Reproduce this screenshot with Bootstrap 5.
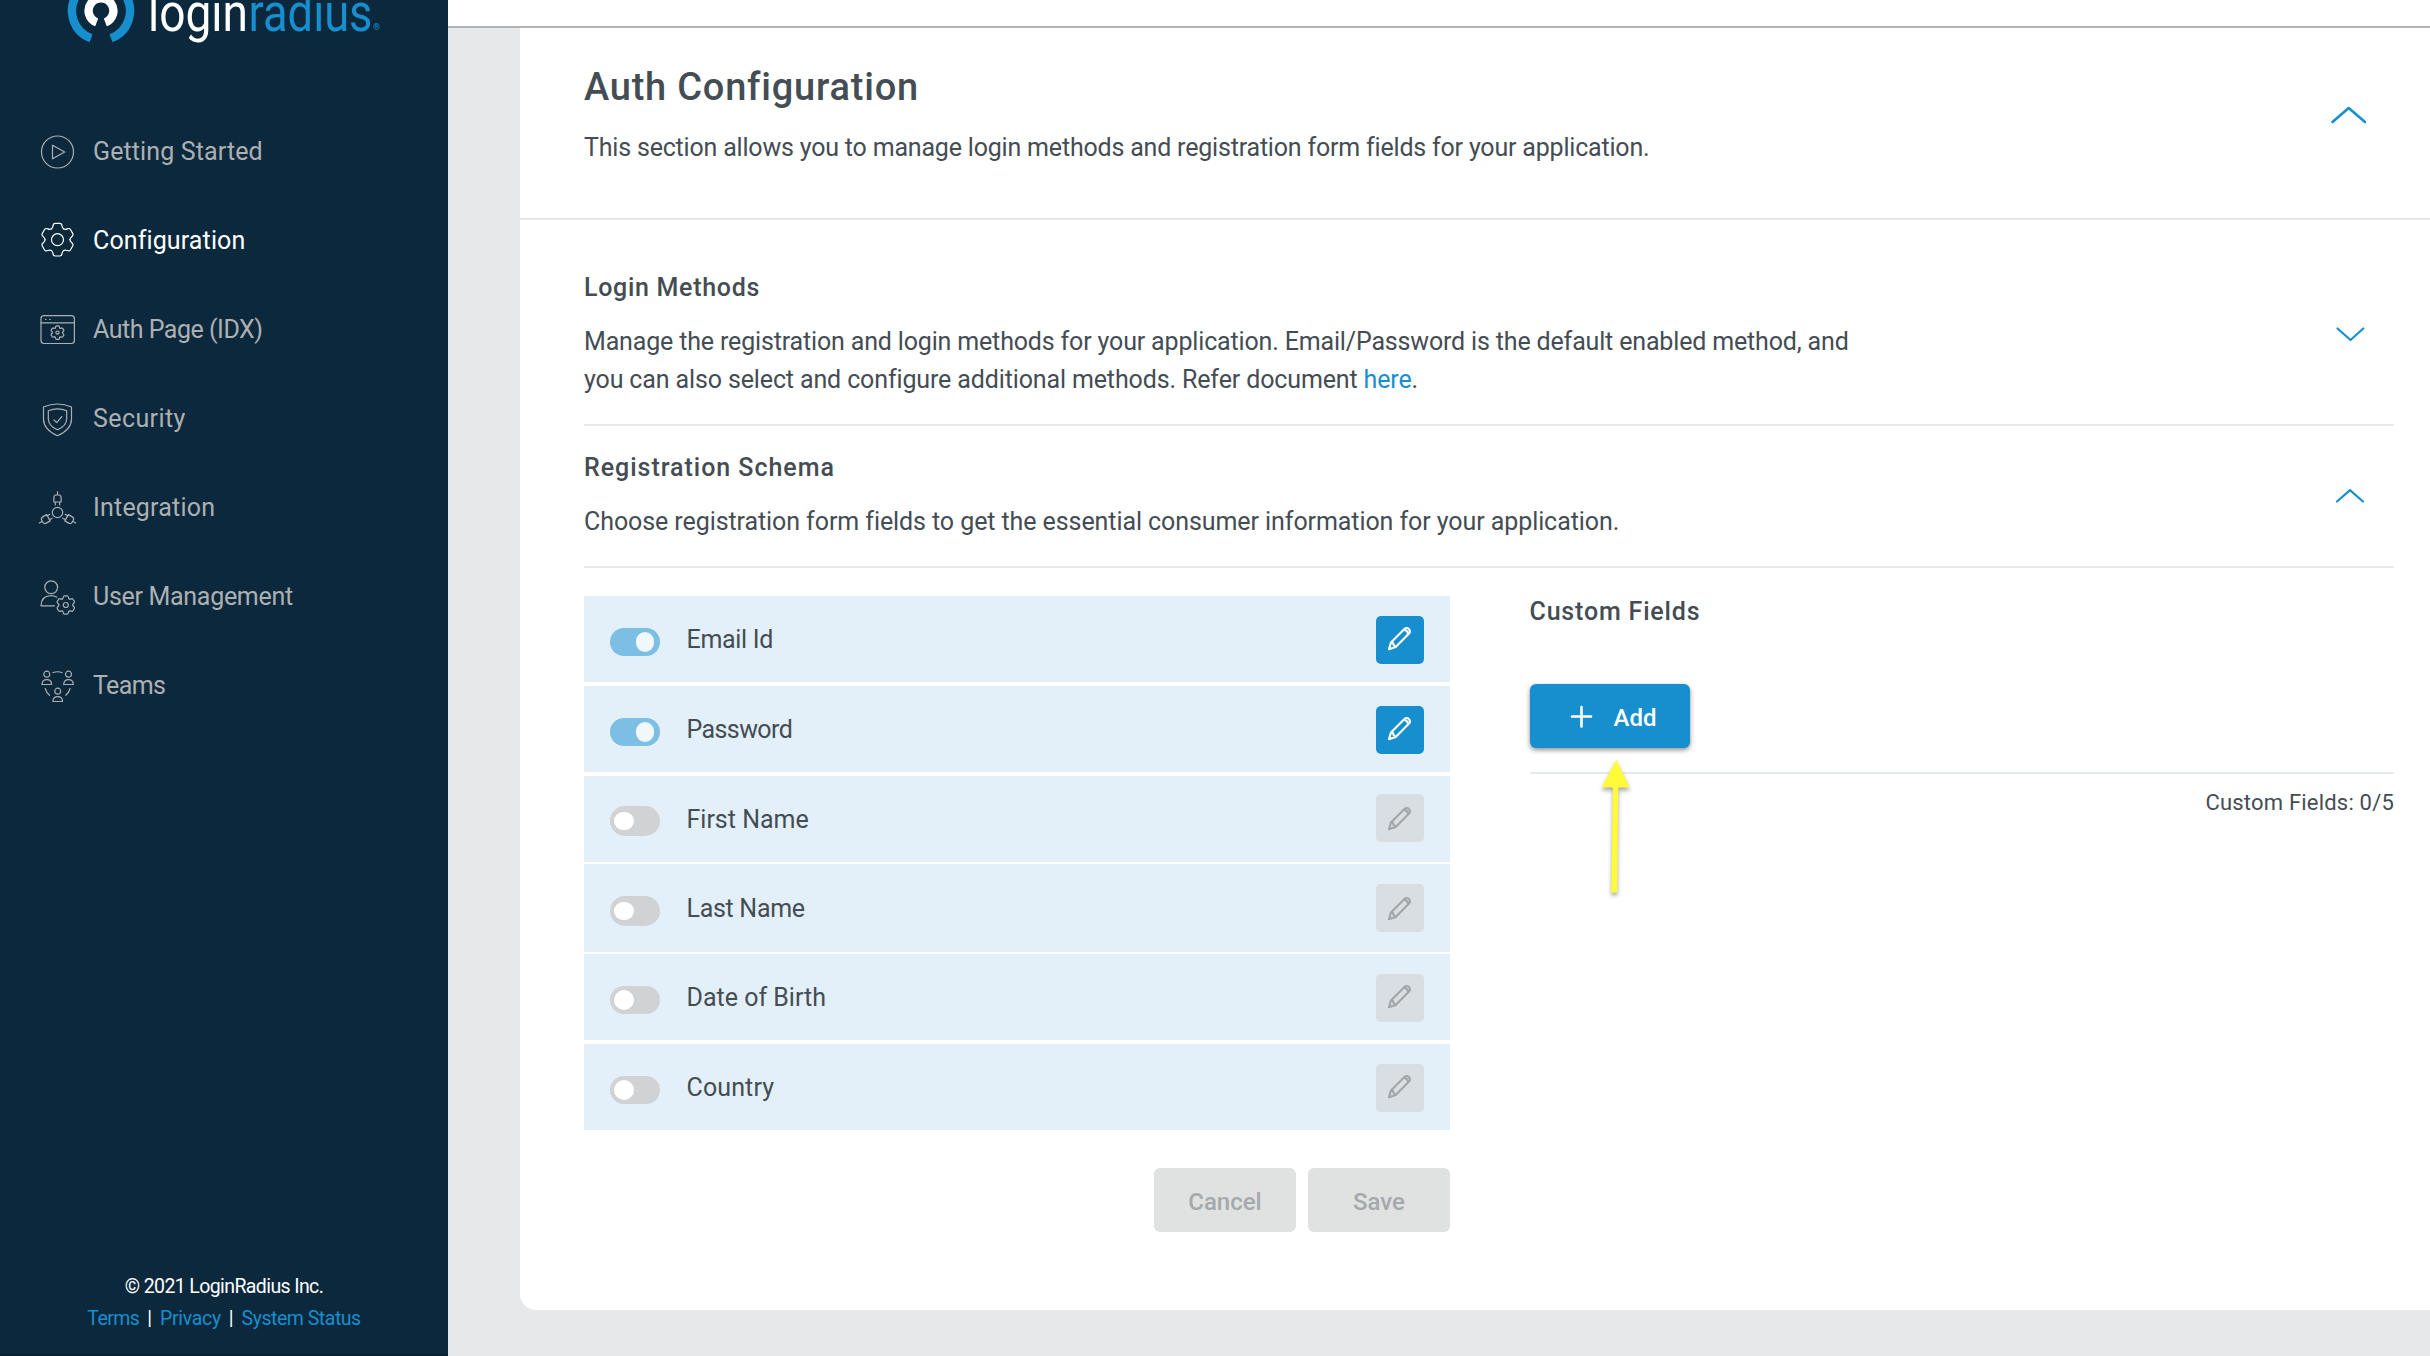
<!DOCTYPE html>
<html lang="en">
<head>
<meta charset="utf-8">
<title>Auth Configuration</title>
<link href="https://cdn.jsdelivr.net/npm/bootstrap@5.3.0/dist/css/bootstrap.min.css" rel="stylesheet">
<style>
body{font-family:Roboto,"Liberation Sans",sans-serif;font-size:25px;line-height:38px;color:#444c54;background:#e7e8ea;height:1356px;overflow:hidden}
a{color:#178fcf;text-decoration:none}
.side-panel{width:448px;height:1356px;background:#0b283c;border-bottom:2px solid #09202f}
.brand{height:107px}
.side-nav .nav-link{height:89px;padding:0 0 0 37px;gap:15px;color:#adb0b3}
.side-nav .nav-link.active{color:#fff}
.side-nav svg{width:41px;height:40px;fill:none;stroke:currentColor;stroke-width:1.2;stroke-linecap:round;stroke-linejoin:round;overflow:visible}
.side-nav use{vector-effect:non-scaling-stroke}
.side-foot{font-size:19.5px;line-height:32px;color:#fff;padding-bottom:19px}
.foot-links{gap:8px}
.topbar{height:28px;background:#fff;border-bottom:2px solid #b0b3b6}
.panel{margin-left:72px;height:1282px;background:#fff;border-radius:0 0 0 16px}
.panel-head{height:192px;padding:36px 64px 0 64px;border-bottom:2px solid #e8e8e8}
.panel-title{font-size:38px;line-height:46px;font-weight:500;letter-spacing:.78px;margin-bottom:19px}
.inner{padding:0 36px 0 64px}
.section-row{border-bottom:2px solid #e8e8e8;padding-right:28px}
.sec-login{height:206px;padding-top:49px}
.sec-schema{height:142px;padding-top:23px}
.sub-title{font-size:25px;line-height:38px;font-weight:500;margin-bottom:16px}
.chev{fill:none;stroke:#178fcf;stroke-width:2.6;stroke-linecap:round;stroke-linejoin:round;flex:none}
.schema-col{width:866px;margin-top:4px}
.field{background:#e3f0f9;height:86px;padding:0 26px;margin-bottom:4px}
.field:nth-child(3){margin-bottom:2px}
.field:nth-child(4){height:88px;margin-bottom:2px}
.field:last-child{margin-bottom:0}
.toggle{width:50px;height:28px;border-radius:15px;background:#d1d2d4;margin-top:32px;padding:4px}
.toggle i{display:block;width:20px;height:20px;border-radius:10px;background:#fff}
.toggle.on{background:#7dbfe4}
.toggle.on i{width:18px;margin-left:22px;border-radius:9px;background:#f1f8fc}
.field:nth-child(3) .toggle{margin-top:30px;height:30px;padding-top:6px}
.field:nth-child(4) .toggle{height:30px;padding-top:6px}
.field:nth-child(3) .toggle i,.field:nth-child(4) .toggle i{height:18px;border-radius:9px}
.field-name{margin:25px 0 0 26.5px}
.field:nth-child(4) .field-name{margin-top:26px}
.edit{width:48px;height:48px;margin-top:20px;padding:0;border:0;border-radius:5px;background:#d9dee2;color:#a2a6a9;line-height:0}
.field:nth-child(3) .edit{margin-top:18px}
.edit.live{background:#178fcf;color:#fff}
.edit svg{fill:none;stroke:currentColor;stroke-width:2.1;stroke-linejoin:round;stroke-linecap:round}
.form-btns{margin-top:38px;gap:12px}
.form-btns .btn{width:142px;height:64px;border:0;border-radius:6px;background:#e0e2e1;color:#a6a9ac;font-size:24px;font-weight:500;opacity:1;padding:4px 0 0}
.custom-col{margin-left:79.500px}
.custom-col .sub-title{margin-bottom:53px;padding-top:1px}
.add-box{height:90px;border-bottom:2px solid #e6ebf0;margin-left:.5px}
.btn-add{width:160px;height:64px;border:0;border-radius:6px;background:#178fcf;color:#fff;font-size:24px;font-weight:500;padding:4px 0 0 40px;gap:20.500px;box-shadow:0 2px 5px rgba(0,0,0,.45)}
.btn-add svg{margin-top:-3px}
.arrow{left:68px;top:70px;filter:drop-shadow(0 3px 2px rgba(0,0,0,.35))}
.count{font-size:22px;line-height:30px;letter-spacing:.2px;margin-top:14px}
.m1{letter-spacing:.12px}.m2{letter-spacing:.4px}.m3{letter-spacing:.2px}
.t0{letter-spacing:-.19px}.t1{letter-spacing:-.16px}.t2{letter-spacing:-.3px}.t3{letter-spacing:-.48px}.t4{letter-spacing:-.6px}.t5{letter-spacing:-.08px}.t6{letter-spacing:-.13px}
.w1{letter-spacing:.7px}.w2{letter-spacing:.97px}.w3{letter-spacing:.82px}
</style>
<script src="https://cdn.jsdelivr.net/npm/bootstrap@5.3.0/dist/js/bootstrap.bundle.min.js"></script>
</head>
<body>
<svg width="0" height="0" class="position-absolute">
<defs>
<path id="tooth" vector-effect="non-scaling-stroke" d="M-6.22-10.78Q-4.8-11.6-4.5-13.9Q-4.2-16.3-2.4-16.3L2.4-16.3Q4.2-16.3 4.5-13.9Q4.8-11.6 6.22-10.78"/>
<g id="cog"><use href="#tooth"/><use href="#tooth" transform="rotate(60)"/><use href="#tooth" transform="rotate(120)"/><use href="#tooth" transform="rotate(180)"/><use href="#tooth" transform="rotate(240)"/><use href="#tooth" transform="rotate(300)"/></g>
<g id="plug"><path d="M0-21V-17.5M-3.6-10.5V-14.5Q-3.6-17.5-1.5-17.5H1.5Q3.6-17.5 3.6-14.5V-10.5ZM-2.2-10.5V-7.5M2.2-10.5V-7.5"/></g>
<g id="person"><circle cy="-3.8" r="3"/><path d="M-4.8 6.5Q-4.8 1.6 0 1.6T4.8 6.5Z"/></g>
<g id="pencil"><path d="M12.9 33.2L15 26.4L28.4 13Q30.7 11 32.9 13.1Q35 15.3 33 17.6L19.7 30.9ZM28 13.6Q31.2 14.6 32.3 18M15.2 26.6L17 27L17.5 28.8L19.5 30.8"/></g>
</defs>
</svg>
<div class="d-flex">
<aside class="side-panel d-flex flex-column flex-shrink-0">
  <div class="brand">
    <svg class="d-block" width="448" height="60">
      <g fill="none" stroke-width="8.4">
        <path stroke="#178fcf" d="M91 38.2A29 29 0 1 1 111 38.2"/>
        <path stroke="#fff" d="M96.7 22.4A12.4 12.4 0 1 1 105.3 22.4"/>
      </g>
      <text x="148" y="30.5" font-size="51" fill="#fff" textLength="100" lengthAdjust="spacingAndGlyphs">login</text>
      <text x="248.500" y="30.5" font-size="51" fill="#178fcf" textLength="124" lengthAdjust="spacingAndGlyphs">radius</text>
      <text x="373" y="30" font-size="9" fill="#178fcf">®</text>
    </svg>
  </div>
  <nav class="side-nav nav flex-column">
    <a class="nav-link d-flex align-items-center m1" href="#"><svg viewBox="-20.5 -20 41 40"><circle r="16"/><path d="M-5-6.8V6.8L7.2 0Z"/></svg>Getting Started</a>
    <a class="nav-link active d-flex align-items-center m1" href="#"><svg viewBox="-20.5 -18.7 41 40"><use href="#cog"/><circle r="6"/></svg>Configuration</a>
    <a class="nav-link d-flex align-items-center t3" href="#"><svg viewBox="-20.5 -20 41 40"><rect x="-16.5" y="-14.3" width="33.4" height="27.8" rx="3"/><path d="M-16.5-7.2H16.9M-12-10.6H-11.6M-7.8-10.6H-7.4"/><g transform="translate(0 2.6) scale(.41)"><use href="#cog"/></g><circle cy="2.6" r="1.6"/></svg>Auth Page (IDX)</a>
    <a class="nav-link d-flex align-items-center m2" href="#"><svg viewBox="-20.5 -20 41 40"><path d="M-14-12Q0-18 14-12V0Q14 10.500 0 16.800Q-14 10.500-14 0ZM-9.200-8.200Q0-12.200 9.200-8.200V-.5Q9.200 7 0 10.800Q-9.200 7-9.200-.5ZM-3.600 .8L-.8 3.600L4.300-2.300"/></svg>Security</a>
    <a class="nav-link d-flex align-items-center m3" href="#"><svg viewBox="-20.5 -20 41 40"><g transform="translate(0 4.500)"><circle r="5.200"/><use href="#plug"/><use href="#plug" transform="rotate(120)"/><use href="#plug" transform="rotate(240)"/></g></svg>Integration</a>
    <a class="nav-link d-flex align-items-center t2" href="#"><svg viewBox="-20.5 -20 41 40"><circle cx="-6.300" cy="-9.700" r="6.400"/><path d="M-3 8.800H-16.500Q-16-1.300-6.300-1.300Q-3-1.300-.7 .2"/><g transform="translate(8.300 8) scale(.56)"><use href="#cog"/></g><circle cx="8.300" cy="8" r="2.500"/></svg>User Management</a>
    <a class="nav-link d-flex align-items-center t4" href="#"><svg viewBox="-20.5 -19.5 41 40"><use href="#person" x="-10.700" y="-7.500"/><use href="#person" x="11" y="-7.500"/><use href="#person" x=".2" y="9.500"/><path d="M-4.500-13Q0-14.500 4.500-13M-12.300 3Q-11 7.500-8 9.800M12.600 3Q11.300 7.500 8.300 9.800"/></svg>Teams</a>
  </nav>
  <footer class="side-foot mt-auto text-center">
    <div class="t4">© 2021 LoginRadius Inc.</div>
    <div class="foot-links d-flex justify-content-center"><a class="t4" href="#">Terms</a><span>|</span><a class="t2" href="#">Privacy</a><span>|</span><a class="t3" href="#">System Status</a></div>
  </footer>
</aside>
<main class="flex-grow-1">
  <header class="topbar"></header>
  <div class="panel">
    <div class="panel-head d-flex justify-content-between">
      <div>
        <h1 class="panel-title">Auth Configuration</h1>
        <p class="mb-0 t0">This section allows you to manage login methods and registration form fields for your application.</p>
      </div>
      <svg class="chev" width="36" height="20" style="margin-top:42px"><path d="M2.500 16L18.700 2L35 16"/></svg>
    </div>
    <div class="inner">
      <section class="section-row sec-login d-flex justify-content-between">
        <div>
          <h2 class="sub-title w1">Login Methods</h2>
          <p class="mb-0"><span class="t1">Manage the registration and login methods for your application. Email/Password is the default enabled method, and</span><br><span class="t6">you can also select and configure additional methods. Refer document <a href="#">here</a>.</span></p>
        </div>
        <svg class="chev" width="32" height="18" style="margin-top:57px"><path stroke-width="2.200" d="M3.500 2.500L16.500 14L29.300 2.500"/></svg>
      </section>
      <section class="section-row sec-schema d-flex justify-content-between">
        <div>
          <h2 class="sub-title w2">Registration Schema</h2>
          <p class="mb-0 t5">Choose registration form fields to get the essential consumer information for your application.</p>
        </div>
        <svg class="chev" width="32" height="18" style="margin-top:39px"><path stroke-width="2.200" d="M3 13.500L16 2.200L29 13.500"/></svg>
      </section>
      <div class="d-flex pt-4">
        <div class="schema-col flex-shrink-0">
          <div>
            <div class="field d-flex align-items-start"><span class="toggle on"><i></i></span><span class="field-name t2">Email Id</span><button class="edit live ms-auto"><svg width="48" height="48"><use href="#pencil"/></svg></button></div>
            <div class="field d-flex align-items-start"><span class="toggle on"><i></i></span><span class="field-name t4">Password</span><button class="edit live ms-auto"><svg width="48" height="48"><use href="#pencil"/></svg></button></div>
            <div class="field d-flex align-items-start"><span class="toggle"><i></i></span><span class="field-name">First Name</span><button class="edit ms-auto"><svg width="48" height="48"><use href="#pencil" y="2"/></svg></button></div>
            <div class="field d-flex align-items-start"><span class="toggle"><i></i></span><span class="field-name t2">Last Name</span><button class="edit ms-auto"><svg width="48" height="48"><use href="#pencil" y="2"/></svg></button></div>
            <div class="field d-flex align-items-start"><span class="toggle"><i></i></span><span class="field-name">Date of Birth</span><button class="edit ms-auto"><svg width="48" height="48"><use href="#pencil"/></svg></button></div>
            <div class="field d-flex align-items-start"><span class="toggle"><i></i></span><span class="field-name m1">Country</span><button class="edit ms-auto"><svg width="48" height="48"><use href="#pencil"/></svg></button></div>
          </div>
          <div class="form-btns d-flex justify-content-end"><button class="btn" disabled>Cancel</button><button class="btn" disabled>Save</button></div>
        </div>
        <div class="custom-col flex-grow-1">
          <h2 class="sub-title w3">Custom Fields</h2>
          <div class="add-box position-relative">
            <button class="btn btn-add d-flex align-items-center"><svg width="23" height="23" stroke="#fff" stroke-width="2.600" stroke-linecap="round"><path d="M11.500 2V21.500M2 11.500H21"/></svg>Add</button>
            <svg class="arrow position-absolute" width="36" height="150" fill="#fffb38"><path d="M18.300 5.500L31.700 33.500H20.300L19.300 138.500H13.300L14.900 33.500H3.700Z"/></svg>
          </div>
          <div class="count text-end">Custom Fields: 0/5</div>
        </div>
      </div>
    </div>
  </div>
</main>
</div>
</body>
</html>
